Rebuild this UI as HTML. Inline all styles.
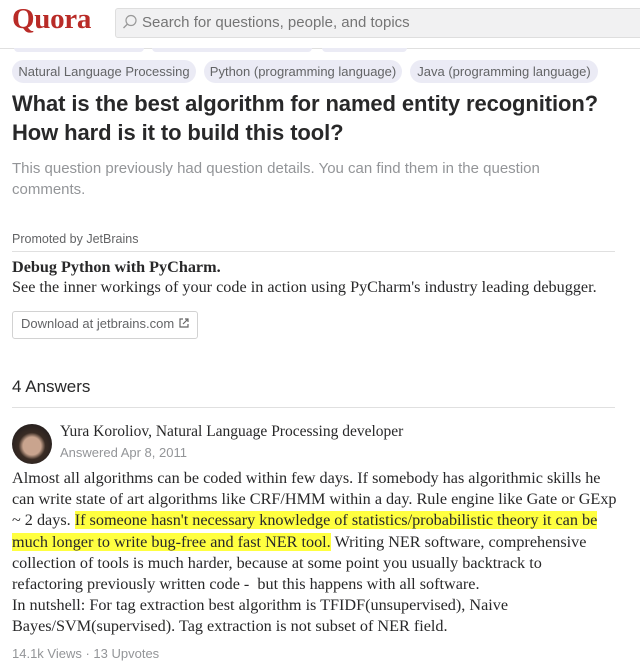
<!DOCTYPE html><html><head><style>
body{margin:0;width:640px;height:663px;overflow:hidden;background:#fff;font-family:"Liberation Sans",sans-serif;color:#282829;position:relative}
.a{position:absolute;white-space:nowrap}
.pill{position:absolute;top:60px;height:23px;border-radius:12px;background:#ebebf5;color:#636466;font-size:13px;line-height:23px;text-align:center}
.serif{font-family:"Liberation Serif",serif;font-size:16.2px}
.hl{background:#ffff40}
</style></head><body>
<div class="a" style="left:12px;top:3px;font-family:'Liberation Serif',serif;font-weight:bold;font-size:29px;color:#b92b27;letter-spacing:-0.3px">Quora</div>
<div class="a" style="left:115px;top:8px;width:530px;height:28px;background:#f1f1f2;border:1px solid #dedede;border-radius:3px"></div>
<svg class="a" style="left:122px;top:14px" width="16" height="16" viewBox="0 0 16 16"><circle cx="9" cy="6.5" r="5" fill="none" stroke="#999" stroke-width="1.2"/><path d="M5.5 10L1.5 14" stroke="#999" stroke-width="1.3"/></svg>
<div class="a" style="left:142px;top:14px;font-size:15px;color:#757575">Search for questions, people, and topics</div>
<div class="a" style="left:0;top:48px;width:640px;height:1px;background:#e0e0e0"></div>
<div class="a" style="left:14px;top:48px;width:130px;height:4px;background:#ebebf5;border-radius:0 0 8px 8px"></div>
<div class="a" style="left:152px;top:48px;width:160px;height:4px;background:#ebebf5;border-radius:0 0 8px 8px"></div>
<div class="a" style="left:322px;top:48px;width:85px;height:4px;background:#ebebf5;border-radius:0 0 8px 8px"></div>
<div class="pill" style="left:12px;width:184px">Natural Language Processing</div>
<div class="pill" style="left:204px;width:198px">Python (programming language)</div>
<div class="pill" style="left:410px;width:188px">Java (programming language)</div>
<div class="a" style="left:12px;top:89px;font-size:22px;font-weight:bold;line-height:29px;color:#282829;letter-spacing:-0.1px">What is the best algorithm for named entity recognition?<br>How hard is it to build this tool?</div>
<div class="a" style="left:12px;top:158px;font-size:15px;line-height:21px;color:#939598">This question previously had question details. You can find them in the question<br>comments.</div>
<div class="a" style="left:12px;top:232px;font-size:12.5px;color:#636466">Promoted by JetBrains</div>
<div class="a" style="left:12px;top:251px;width:603px;height:1px;background:#e0e0e0"></div>
<div class="a serif" style="left:12px;top:258px;font-weight:bold;color:#282829">Debug Python with PyCharm.</div>
<div class="a serif" style="left:12px;top:278px">See the inner workings of your code in action using PyCharm's industry leading debugger.</div>
<div class="a" style="left:12px;top:311px;width:184px;height:26px;border:1px solid #d2d2d2;border-radius:3px"></div>
<div class="a" style="left:21px;top:316px;font-size:13px;color:#636466">Download at jetbrains.com</div>
<svg class="a" style="left:179px;top:318px" width="10" height="10" viewBox="0 0 10 10"><path d="M4 1H1v8h8V6M6 1h3v3M9 1L4 6" fill="none" stroke="#666" stroke-width="1.2"/></svg>
<div class="a" style="left:12px;top:377px;font-size:17px;color:#282829">4 Answers</div>
<div class="a" style="left:12px;top:407px;width:603px;height:1px;background:#e0e0e0"></div>
<div class="a" style="left:12px;top:424px;width:40px;height:40px;border-radius:50%;background:radial-gradient(circle at 50% 55%,#c9a48e 0 30%,#3a2c24 45%,#2a2220 70%)"></div>
<div class="a serif" style="left:60px;top:423px;font-size:15.5px">Yura Koroliov, Natural Language Processing developer</div>
<div class="a" style="left:60px;top:445px;font-size:13px;color:#939598">Answered Apr 8, 2011</div>
<div class="a serif" style="left:12px;top:468px;line-height:21.2px;color:#282829">Almost all algorithms can be coded within few days. If somebody has algorithmic skills he<br>can write state of art algorithms like CRF/HMM within a day. Rule engine like Gate or GExp<br>~ 2 days. <span class="hl">If someone hasn't necessary knowledge of statistics/probabilistic theory it can be</span><br><span class="hl">much longer to write bug-free and fast NER tool.</span> Writing NER software, comprehensive<br>collection of tools is much harder, because at some point you usually backtrack to<br>refactoring previously written code -&nbsp; but this happens with all software.<br>In nutshell: For tag extraction best algorithm is TFIDF(unsupervised), Naive<br>Bayes/SVM(supervised). Tag extraction is not subset of NER field.</div>
<div class="a" style="left:12px;top:646px;font-size:13px;color:#939598">14.1k Views · 13 Upvotes</div>
</body></html>
